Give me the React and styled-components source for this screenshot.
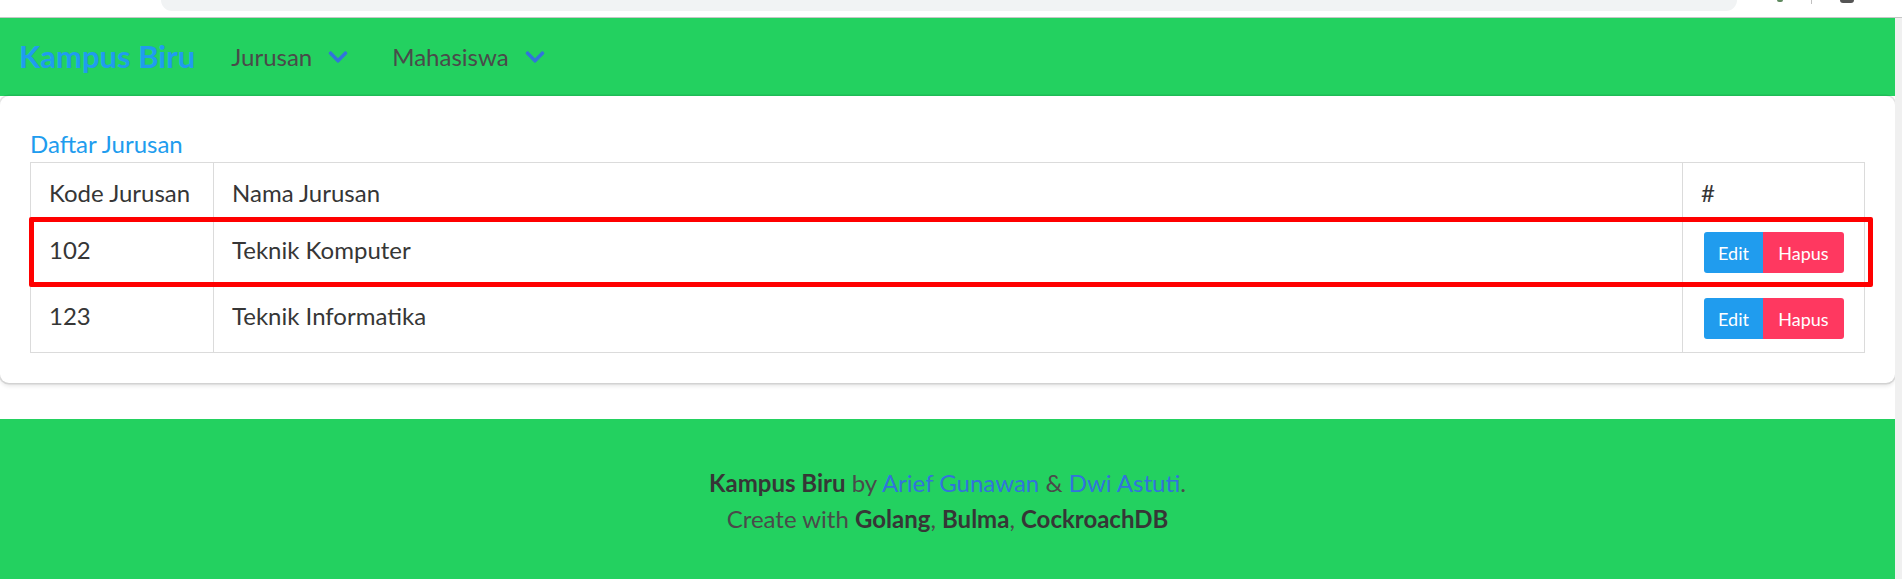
import styled, { createGlobalStyle } from 'styled-components';
import { FaChevronDown } from 'react-icons/fa';

const GlobalStyle = createGlobalStyle`
  html, body {
    margin: 0;
    padding: 0;
    background: #ffffff;
  }
  body {
    font-family: Lato, "Open Sans", "Noto Sans", sans-serif;
    font-size: 24px;
    line-height: 1.5;
    color: #4a4a4a;
    overflow: hidden;
  }
`

const jurusan = [
  { kode: '102', nama: 'Teknik Komputer' },
  { kode: '123', nama: 'Teknik Informatika' },
]

function App() {
  return (
    <Page>
      <GlobalStyle />
      <Chrome>
        <AddressBar />
        <ChromeIcons>
          <Dot />
          <Divider />
          <Avatar />
        </ChromeIcons>
      </Chrome>
      <Viewport>
        <Main>
          <Navbar>
            <Brand href="#">Kampus Biru</Brand>
            <NavItem href="#">
              Jurusan
              <Icon><FaChevronDown size={22} /></Icon>
            </NavItem>
            <NavItem href="#">
              Mahasiswa
              <Icon><FaChevronDown size={22} /></Icon>
            </NavItem>
          </Navbar>

          <Box>
            <Title>Daftar Jurusan</Title>
            <TableWrap>
              <Table>
                <colgroup>
                  <Col $w="183px" />
                  <Col />
                  <Col $w="182px" />
                </colgroup>
                <thead>
                  <tr>
                    <Th>Kode Jurusan</Th>
                    <Th>Nama Jurusan</Th>
                    <Th>#</Th>
                  </tr>
                </thead>
                <tbody>
                  {jurusan.map((j) => (
                    <tr key={j.kode}>
                      <Td>{j.kode}</Td>
                      <Td>{j.nama}</Td>
                      <Td>
                        <Buttons>
                          <Button $color="#209cee" $w="59px">Edit</Button>
                          <Button $color="#ff3860" $w="81px">Hapus</Button>
                        </Buttons>
                      </Td>
                    </tr>
                  ))}
                </tbody>
              </Table>
              <Highlight />
            </TableWrap>
          </Box>

          <Footer>
            <p>
              <strong>Kampus Biru</strong> by <FootLink href="#">Arief Gunawan</FootLink> &amp; <FootLink href="#">Dwi Astuti</FootLink>.
            </p>
            <p>
              Create with <strong>Golang</strong>, <strong>Bulma</strong>, <strong>CockroachDB</strong>
            </p>
          </Footer>
        </Main>
        <Scrollbar />
      </Viewport>
    </Page>
  )
}

const Page = styled.div`
  width: 1902px;
  height: 579px;
  overflow: hidden;
  display: flex;
  flex-direction: column;
`

const Chrome = styled.div`
  height: 17px;
  flex: 0 0 17px;
  border-bottom: 1px solid #c6c6c6;
  display: flex;
  align-items: flex-start;
  background: #ffffff;
`

const AddressBar = styled.div`
  margin-left: 161px;
  width: 1576px;
  height: 11px;
  background: #f1f3f4;
  border-radius: 0 0 12px 12px;
`

const ChromeIcons = styled.div`
  display: flex;
  align-items: flex-start;
  margin-left: 40px;
  gap: 28px;
`

const Dot = styled.span`
  width: 6px;
  height: 2px;
  background: #5f8a5f;
  border-radius: 0 0 3px 3px;
`

const Divider = styled.span`
  width: 1px;
  height: 4px;
  background: #c0c0c0;
`

const Avatar = styled.span`
  width: 14px;
  height: 3px;
  background: #555;
  border-radius: 0 0 7px 7px;
`

const Viewport = styled.div`
  flex: 1;
  display: flex;
  min-height: 0;
`

const Main = styled.div`
  flex: 1;
  display: flex;
  flex-direction: column;
`

const Scrollbar = styled.div`
  width: 7px;
  background: #f0f0f0;
`

const Navbar = styled.nav`
  height: 78px;
  flex: 0 0 78px;
  background: #23d160;
  display: flex;
  align-items: stretch;
`

const Brand = styled.a`
  display: flex;
  align-items: center;
  padding: 0 18px 2px 19px;
  font-size: 31px;
  font-weight: 700;
  color: #209cee;
  text-decoration: none;
`

const NavItem = styled.a`
  display: flex;
  align-items: center;
  padding: 0 18px;
  color: #4a4a4a;
  text-decoration: none;
  font-size: 24px;
`

const Icon = styled.span`
  display: inline-flex;
  align-items: center;
  justify-content: center;
  width: 36px;
  height: 36px;
  margin-left: 8px;
  color: #3273dc;
`

const Box = styled.div`
  background: #ffffff;
  border-radius: 9px;
  box-shadow: 0 3px 4.5px rgba(10, 10, 10, 0.1), 0 0 0 1.5px rgba(10, 10, 10, 0.1);
  padding: 30px;
  margin-bottom: 36px;
`

const Title = styled.div`
  color: #209cee;
  line-height: 36px;
`

const TableWrap = styled.div`
  position: relative;
`

const Table = styled.table`
  width: 100%;
  table-layout: fixed;
  border-collapse: collapse;
  color: #363636;
`

const Col = styled.col`
  width: ${(p) => p.$w || 'auto'};
`

const Th = styled.th`
  text-align: left;
  font-weight: 400;
  vertical-align: top;
  border: 1px solid #dbdbdb;
  padding: 12px 18px 9px;
  line-height: 36px;
`

const Td = styled.td`
  vertical-align: top;
  border: 1px solid #dbdbdb;
  padding: 11px 18px 13px;
  line-height: 36px;
  height: 41px;
`

const Buttons = styled.div`
  display: flex;
  padding-left: 3px;
`

const Button = styled.span`
  display: inline-flex;
  align-items: center;
  justify-content: center;
  width: ${(p) => p.$w};
  height: 41px;
  font-size: 18px;
  line-height: 1;
  color: #ffffff;
  background: ${(p) => p.$color};
  &:first-child {
    border-radius: 3px 0 0 3px;
  }
  &:last-child {
    border-radius: 0 3px 3px 0;
  }
`

const Highlight = styled.div`
  position: absolute;
  left: -1px;
  top: 55px;
  width: 1844px;
  height: 70px;
  box-sizing: border-box;
  border: 5px solid #ff0000;
  border-radius: 2px;
  pointer-events: none;
`

const Footer = styled.footer`
  flex: 1;
  background: #23d160;
  padding: 46px 24px 0;
  text-align: center;
  color: #4a4a4a;
  line-height: 36px;

  p {
    margin: 0;
  }
  strong {
    color: #363636;
    font-weight: 700;
  }
`

const FootLink = styled.a`
  color: #3273dc;
  text-decoration: none;
`

export default App
